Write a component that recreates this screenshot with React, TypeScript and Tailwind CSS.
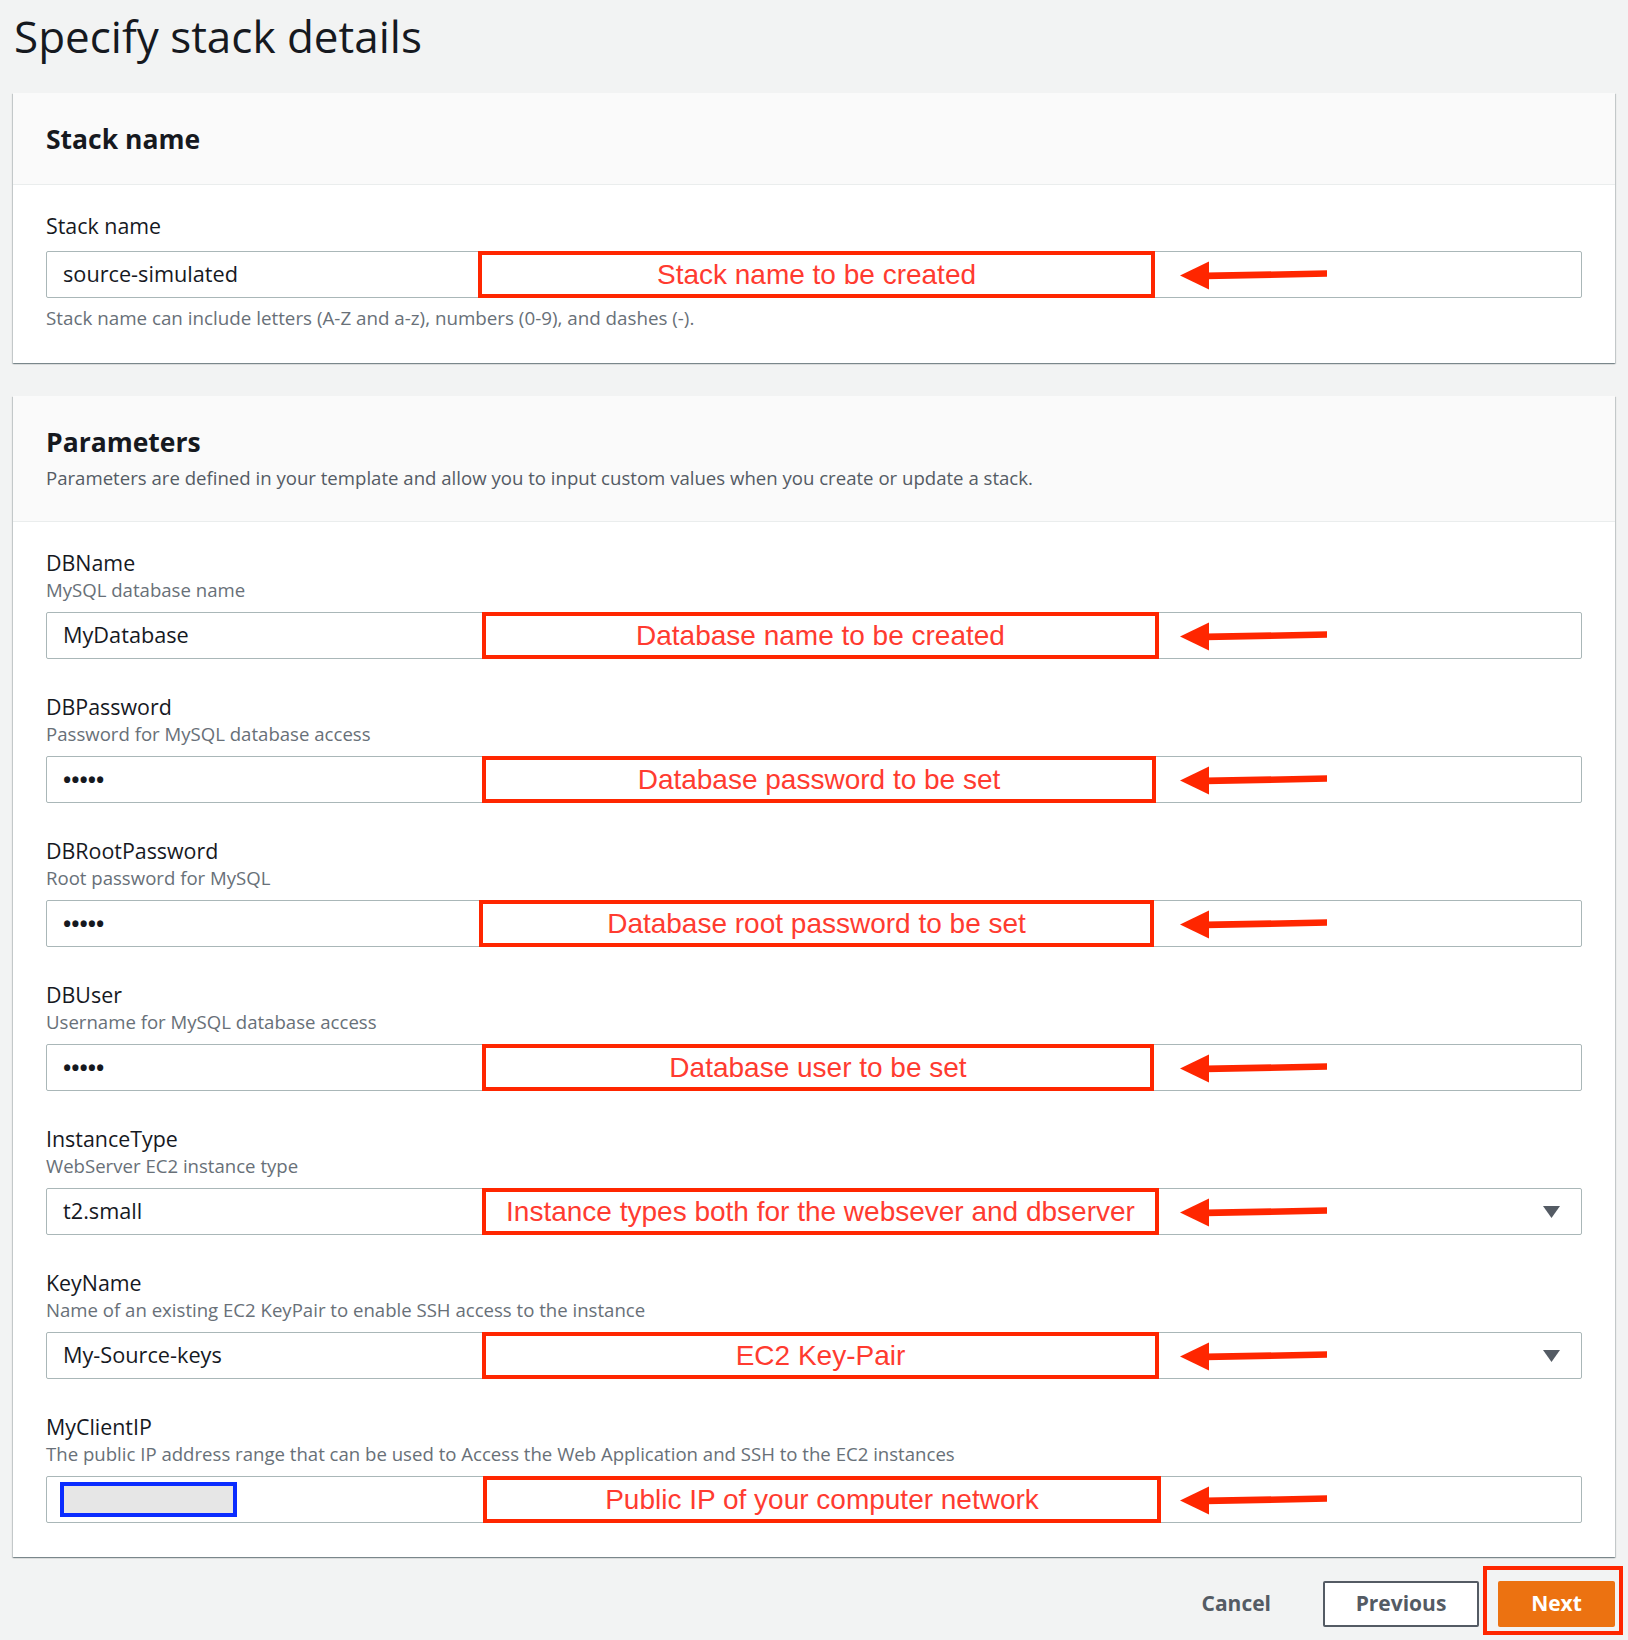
import React from "react";

const FONT = { fontFamily: '"Open Sans", "Noto Sans", sans-serif' };
const ANN = { fontFamily: '"Liberation Sans", Arial, sans-serif' };

type Row = {
  label: string;
  desc: string;
  value: string;
  kind: "text" | "password" | "select" | "ip";
  note: string;
  left: number;
  width: number;
};

const rows: Row[] = [
  { label: "DBName", desc: "MySQL database name", value: "MyDatabase", kind: "text", note: "Database name to be created", left: 435, width: 677 },
  { label: "DBPassword", desc: "Password for MySQL database access", value: "•••••", kind: "password", note: "Database password to be set", left: 435, width: 674 },
  { label: "DBRootPassword", desc: "Root password for MySQL", value: "•••••", kind: "password", note: "Database root password to be set", left: 432, width: 675 },
  { label: "DBUser", desc: "Username for MySQL database access", value: "•••••", kind: "password", note: "Database user to be set", left: 435, width: 672 },
  { label: "InstanceType", desc: "WebServer EC2 instance type", value: "t2.small", kind: "select", note: "Instance types both for the websever and dbserver", left: 435, width: 677 },
  { label: "KeyName", desc: "Name of an existing EC2 KeyPair to enable SSH access to the instance", value: "My-Source-keys", kind: "select", note: "EC2 Key-Pair", left: 435, width: 677 },
  { label: "MyClientIP", desc: "The public IP address range that can be used to Access the Web Application and SSH to the EC2 instances", value: "", kind: "ip", note: "Public IP of your computer network", left: 436, width: 678 },
];

function Arrow() {
  return (
    <svg
      className="absolute top-1/2 -translate-y-1/2"
      style={{ left: 1133 }}
      width="148"
      height="30"
      viewBox="0 0 148 30"
    >
      <polygon points="0,15.5 29,1.5 29,29.5" fill="#ff2600" />
      <polygon points="26,12.6 147,10.3 147,16.8 26,19.2" fill="#ff2600" />
    </svg>
  );
}

function Annotated({
  value,
  kind,
  note,
  left,
  width,
}: {
  value: string;
  kind: Row["kind"];
  note: string;
  left: number;
  width: number;
}) {
  return (
    <div className="relative h-[47px] rounded-[2px] border border-[#aab7b8] bg-white flex items-center pl-[16px]">
      {kind === "password" ? (
        <span className="text-[22px] font-bold text-[#16191f]">{value}</span>
      ) : kind === "ip" ? (
        <div className="ml-[-3px] h-[35px] w-[177px] border-[4px] border-[#0a2cff] bg-[#e6e6e6]" />
      ) : (
        <span className="text-[21.7px] text-[#16191f]">{value}</span>
      )}
      {kind === "select" && (
        <svg className="absolute right-[21px] top-1/2 -translate-y-1/2" width="17" height="12" viewBox="0 0 17 12">
          <polygon points="0,0 17,0 8.5,12" fill="#545b64" />
        </svg>
      )}
      <div
        className="absolute top-[-1px] bottom-[-1px] border-[4px] border-[#ff2600] bg-white flex items-center justify-center"
        style={{ left, width }}
      >
        <span style={ANN} className="text-[28px] leading-none text-[#ff3b30] whitespace-nowrap">
          {note}
        </span>
      </div>
      <Arrow />
    </div>
  );
}

export default function App() {
  return (
    <div style={FONT} className="min-h-[1640px] w-[1628px] bg-[#f2f3f3] px-[13px] pt-[9px] text-[#16191f]">
      <h1 className="text-[44px] leading-[54px] font-normal pl-[1px]">Specify stack details</h1>

      {/* Stack name card */}
      <div className="mt-[30px] bg-white shadow-[0_1px_1px_0_rgba(0,28,36,0.3),1px_1px_1px_0_rgba(0,28,36,0.15),-1px_1px_1px_0_rgba(0,28,36,0.15)]">
        <div className="h-[92px] bg-[#fafafa] border-b border-[#eaeded] flex items-center px-[33px]">
          <h2 className="text-[26.5px] font-bold leading-[32px]">Stack name</h2>
        </div>
        <div className="px-[33px] pt-[28px] pb-[34px]">
          <div className="text-[21.4px] leading-[26px]">Stack name</div>
          <div className="mt-[12px]">
            <Annotated value="source-simulated" kind="text" note="Stack name to be created" left={431} width={677} />
          </div>
          <div className="mt-[9px] text-[18.8px] leading-[22px] text-[#687078]">
            Stack name can include letters (A-Z and a-z), numbers (0-9), and dashes (-).
          </div>
        </div>
      </div>

      {/* Parameters card */}
      <div className="mt-[33px] bg-white shadow-[0_1px_1px_0_rgba(0,28,36,0.3),1px_1px_1px_0_rgba(0,28,36,0.15),-1px_1px_1px_0_rgba(0,28,36,0.15)]">
        <div className="h-[126px] bg-[#fafafa] border-b border-[#eaeded] px-[33px] pt-[30px]">
          <h2 className="text-[26.5px] font-bold leading-[32px]">Parameters</h2>
          <div className="mt-[8px] text-[18.6px] leading-[24px] text-[#545b64]">
            Parameters are defined in your template and allow you to input custom values when you create or update a stack.
          </div>
        </div>
        <div className="px-[33px] pt-[28px] pb-[34px] flex flex-col gap-[35px]">
          {rows.map((r) => (
            <div key={r.label}>
              <div className="text-[21.4px] leading-[26px]">{r.label}</div>
              <div className="mt-[3px] text-[18.6px] leading-[22px] text-[#687078]">{r.desc}</div>
              <div className="mt-[11px]">
                <Annotated value={r.value} kind={r.kind} note={r.note} left={r.left} width={r.width} />
              </div>
            </div>
          ))}
        </div>
      </div>

      {/* Buttons */}
      <div className="mt-[24px] flex items-center justify-end">
        <span className="mr-[52px] text-[21px] font-bold text-[#545b64]">Cancel</span>
        <button className="h-[46px] w-[156px] rounded-[2px] border-2 border-[#545b64] bg-white text-[21px] font-bold text-[#545b64]">
          Previous
        </button>
        <div className="relative ml-[19px]">
          <button className="h-[46px] w-[117px] rounded-[2px] bg-[#ec7211] text-[21px] font-bold text-white">
            Next
          </button>
          <div className="pointer-events-none absolute left-[-15px] right-[-8px] top-[-15px] bottom-[-8px] border-[4px] border-[#ff2600]" />
        </div>
      </div>
    </div>
  );
}
